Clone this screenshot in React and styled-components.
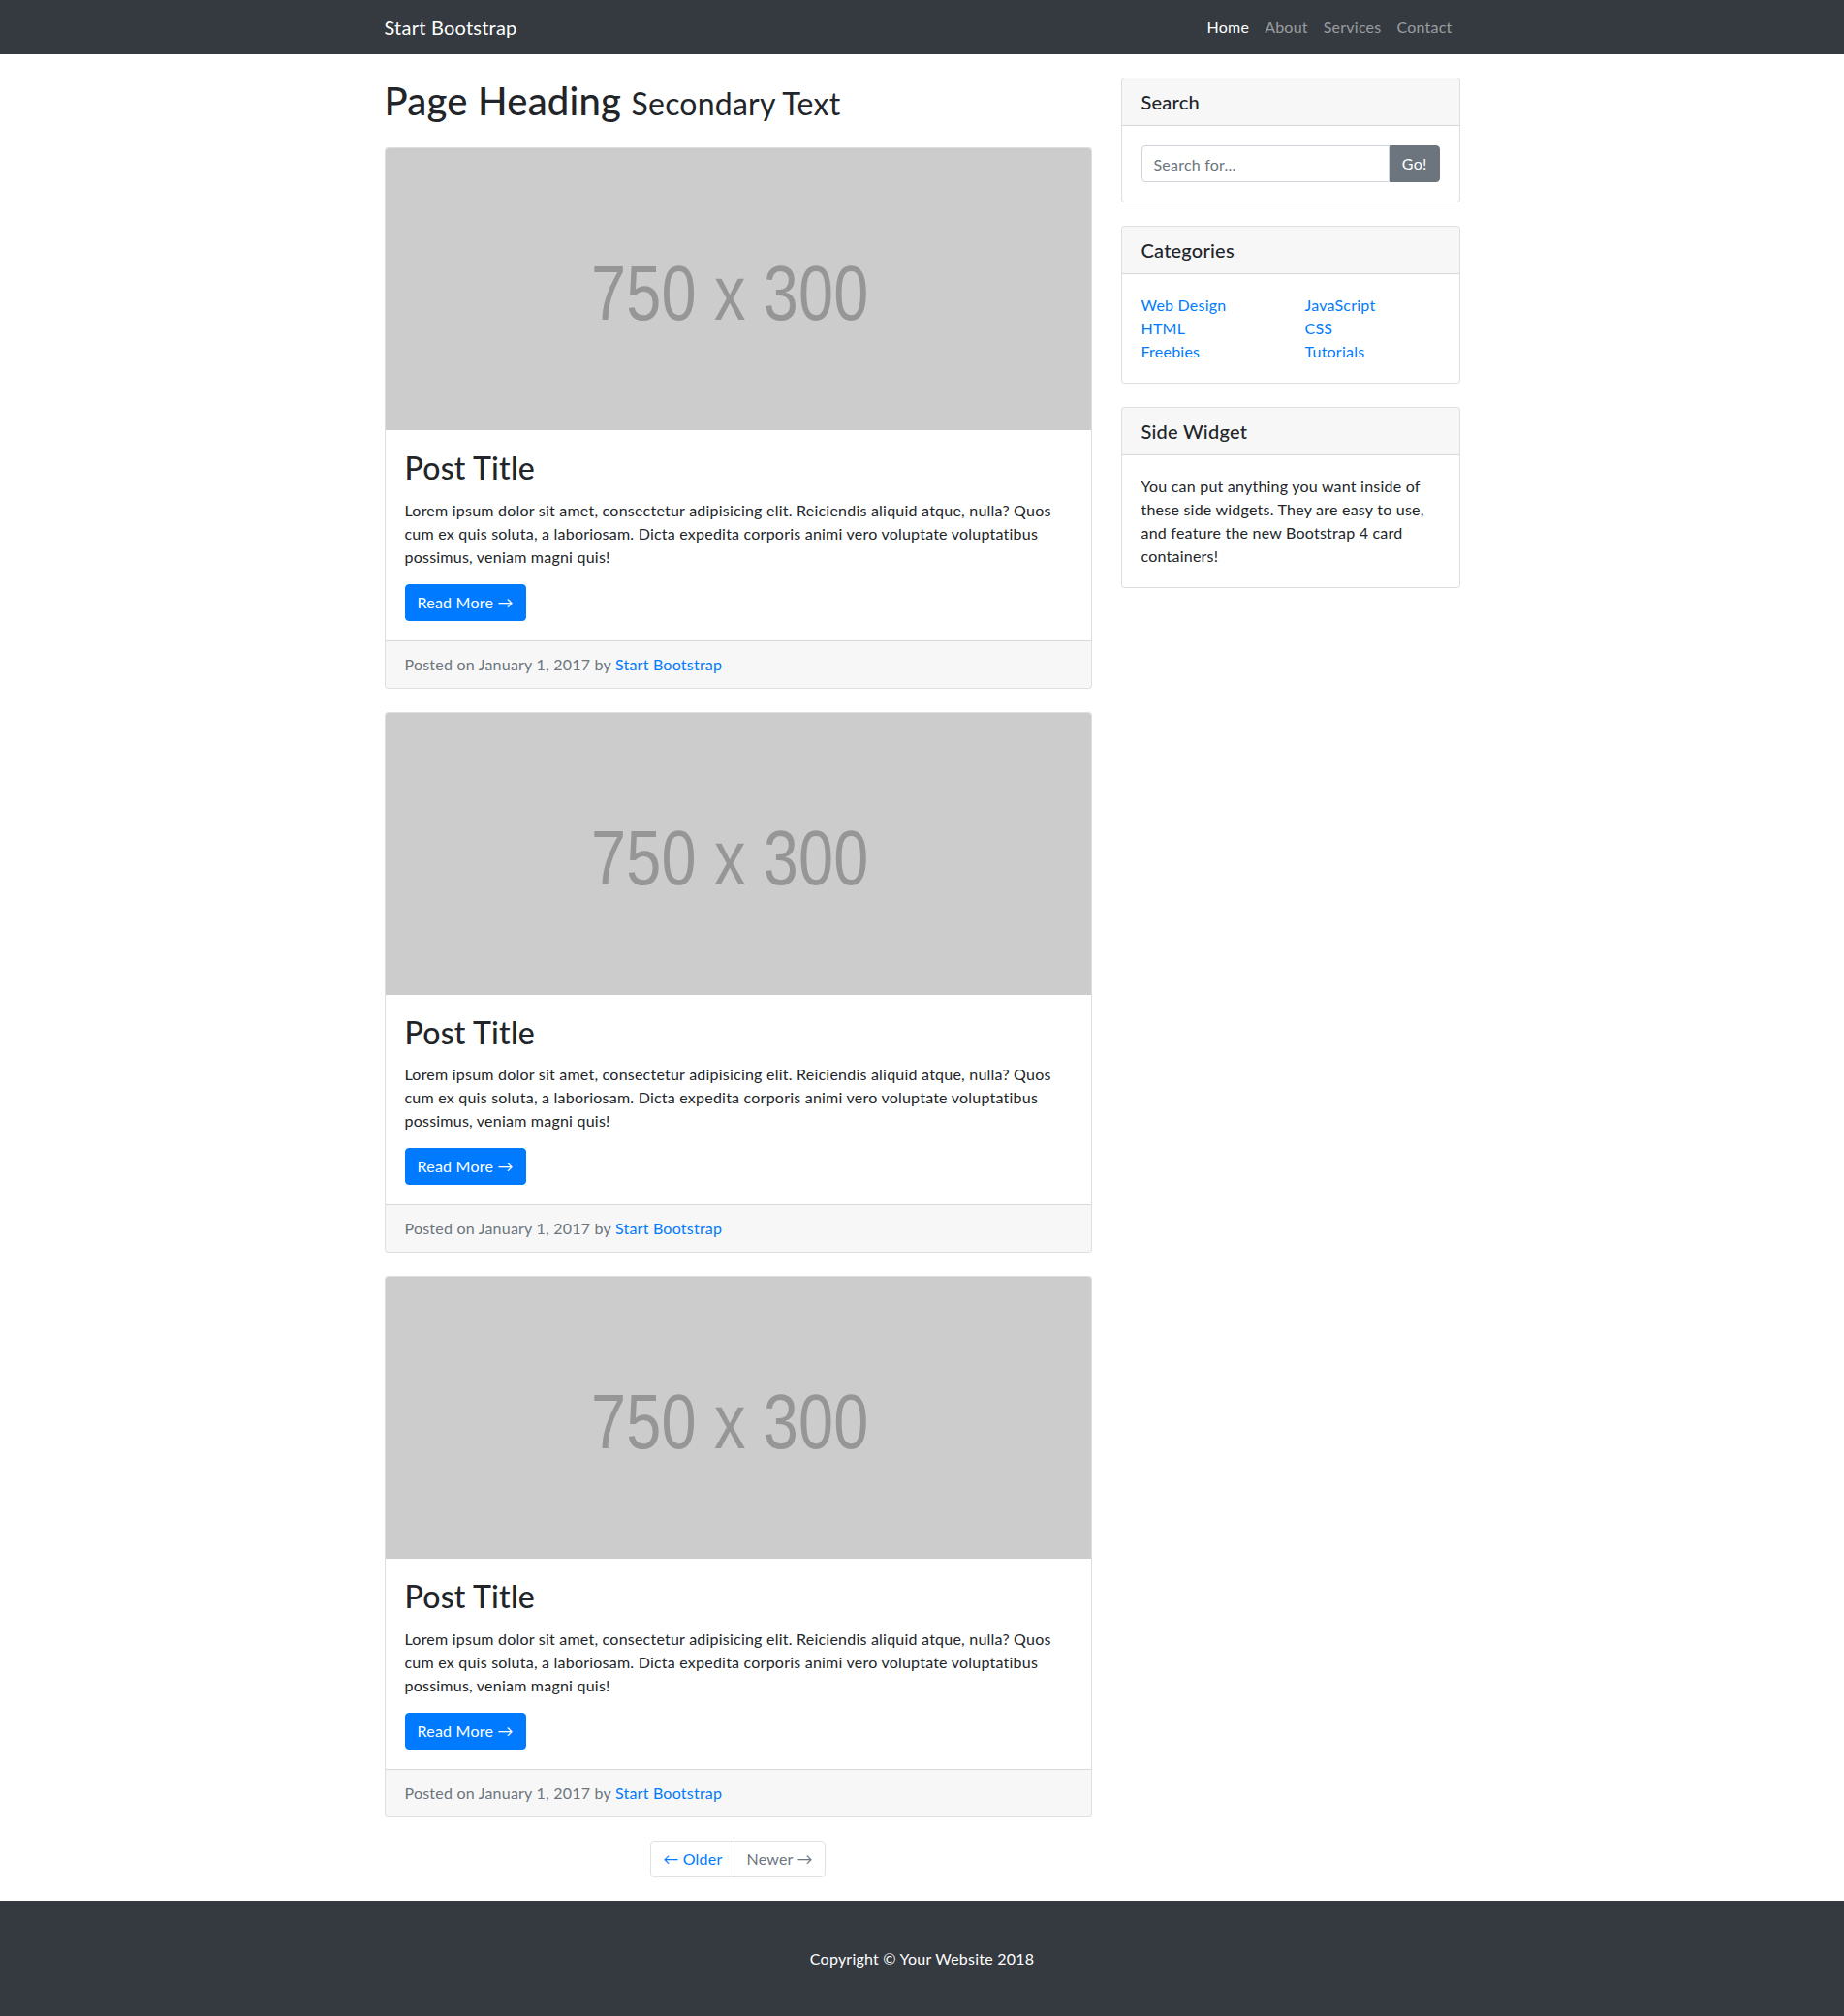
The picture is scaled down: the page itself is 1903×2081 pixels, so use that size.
import React from "react";
import styled, { createGlobalStyle } from "styled-components";

const GlobalStyle = createGlobalStyle`
  * { box-sizing: border-box; }
  body {
    margin: 0;
    font-family: Lato, "Noto Sans", Arial, sans-serif;
    font-size: 16px;
    line-height: 1.5;
    letter-spacing: 0.014em;
    color: #212529;
    background: #fff;
  }
  a { color: #007bff; text-decoration: none; }
`;

const Container = styled.div`
  width: 1140px;
  margin: 0 auto;
  padding: 0 15px;
`;

const Navbar = styled.nav`
  background: #343a40;
  padding: 8px 0;
  ${Container} {
    display: flex;
    align-items: center;
    justify-content: space-between;
  }
`;

const Brand = styled.a`
  color: #fff;
  font-size: 20px;
  line-height: 30px;
  padding: 5px 0;
`;

const NavList = styled.ul`
  display: flex;
  list-style: none;
  margin: 0;
  padding: 0;
`;

const NavLink = styled.a`
  display: block;
  padding: 8px;
  color: ${(p) => (p.$active ? "#fff" : "rgba(255,255,255,.5)")};
`;

const Row = styled.div`
  display: flex;
  margin: 0 -15px;
`;

const Col = styled.div`
  flex: 0 0 ${(p) => p.$size}%;
  max-width: ${(p) => p.$size}%;
  padding: 0 15px;
`;

const PageHeading = styled.h1`
  margin: 24px 0;
  font-size: 40px;
  font-weight: 500;
  line-height: 1.2;
  small {
    font-size: 80%;
    font-weight: 400;
  }
`;

const Card = styled.div`
  border: 1px solid rgba(0, 0, 0, 0.125);
  border-radius: 4px;
  margin: ${(p) => (p.$side ? "24px 0" : "0 0 24px")};
  overflow: hidden;
  background: #fff;
`;

const Thumb = styled.svg`
  display: block;
  width: 100%;
  height: auto;
  background: #ccc;
`;

const CardBody = styled.div`
  padding: 20px;
`;

const CardTitle = styled.h2`
  margin: 0 0 12px;
  font-size: 32px;
  font-weight: 500;
  line-height: 1.2;
`;

const CardText = styled.p`
  margin: 0 0 16px;
`;

const Button = styled.a`
  display: inline-block;
  padding: 6px 12px;
  border-radius: 4px;
  border: 1px solid #007bff;
  background: #007bff;
  color: #fff;
  line-height: 24px;
`;

const CardFooter = styled.div`
  padding: 12px 20px;
  background: rgba(0, 0, 0, 0.03);
  border-top: 1px solid rgba(0, 0, 0, 0.125);
  color: #6c757d;
`;

const CardHeader = styled.h5`
  margin: 0;
  padding: 12px 20px;
  font-size: 20px;
  font-weight: 500;
  line-height: 1.2;
  background: rgba(0, 0, 0, 0.03);
  border-bottom: 1px solid rgba(0, 0, 0, 0.125);
`;

const InputGroup = styled.div`
  display: flex;
`;

const Input = styled.input`
  flex: 1;
  min-width: 0;
  height: 38px;
  padding: 6px 12px;
  font: inherit;
  letter-spacing: inherit;
  color: #495057;
  border: 1px solid #ced4da;
  border-radius: 4px 0 0 4px;
  &::placeholder { color: #6c757d; }
`;

const GoButton = styled.button`
  padding: 6px 12px;
  font: inherit;
  letter-spacing: inherit;
  line-height: 24px;
  color: #fff;
  background: #6c757d;
  border: 1px solid #6c757d;
  border-radius: 0 4px 4px 0;
`;

const CatGrid = styled.div`
  display: grid;
  grid-template-columns: 1fr 1fr;
  margin: 0 -15px;
`;

const CatList = styled.ul`
  list-style: none;
  margin: 0;
  padding: 0 15px;
`;

const Pagination = styled.ul`
  display: flex;
  justify-content: center;
  list-style: none;
  margin: 0 0 24px;
  padding: 0;
`;

const PageLink = styled.a`
  display: block;
  padding: 8px 12px;
  line-height: 20px;
  border: 1px solid #dee2e6;
  color: ${(p) => (p.$disabled ? "#6c757d" : "#007bff")};
  margin-left: ${(p) => (p.$first ? "0" : "-1px")};
  border-radius: ${(p) => (p.$first ? "4px 0 0 4px" : "0 4px 4px 0")};
`;

const Footer = styled.footer`
  background: #343a40;
  padding: 48px 0;
  p {
    margin: 0;
    color: #fff;
    text-align: center;
  }
`;

const Post = () => (
  <Card>
    <Thumb viewBox="0 0 750 300">
      <text
        x="366"
        y="182"
        textAnchor="middle"
        fontFamily="'Liberation Sans', Arial, sans-serif"
        fontSize="83"
        fill="#969696"
        textLength="295"
        lengthAdjust="spacingAndGlyphs"
      >
        750 x 300
      </text>
    </Thumb>
    <CardBody>
      <CardTitle>Post Title</CardTitle>
      <CardText>
        Lorem ipsum dolor sit amet, consectetur adipisicing elit. Reiciendis
        aliquid atque, nulla? Quos cum ex quis soluta, a laboriosam. Dicta
        expedita corporis animi vero voluptate voluptatibus possimus, veniam
        magni quis!
      </CardText>
      <Button href="#">Read More &rarr;</Button>
    </CardBody>
    <CardFooter>
      Posted on January 1, 2017 by <a href="#">Start Bootstrap</a>
    </CardFooter>
  </Card>
);

export default function App() {
  return (
    <>
      <GlobalStyle />
      <Navbar>
        <Container>
          <Brand href="#">Start Bootstrap</Brand>
          <NavList>
            <li><NavLink $active href="#">Home</NavLink></li>
            <li><NavLink href="#">About</NavLink></li>
            <li><NavLink href="#">Services</NavLink></li>
            <li><NavLink href="#">Contact</NavLink></li>
          </NavList>
        </Container>
      </Navbar>

      <Container>
        <Row>
          <Col $size={66.666667}>
            <PageHeading>
              Page Heading <small>Secondary Text</small>
            </PageHeading>
            <Post />
            <Post />
            <Post />
            <Pagination>
              <li><PageLink $first href="#">&larr; Older</PageLink></li>
              <li><PageLink $disabled href="#">Newer &rarr;</PageLink></li>
            </Pagination>
          </Col>

          <Col $size={33.333333}>
            <Card $side>
              <CardHeader>Search</CardHeader>
              <CardBody>
                <InputGroup>
                  <Input type="text" placeholder="Search for..." />
                  <GoButton type="button">Go!</GoButton>
                </InputGroup>
              </CardBody>
            </Card>

            <Card $side>
              <CardHeader>Categories</CardHeader>
              <CardBody>
                <CatGrid>
                  <CatList>
                    <li><a href="#">Web Design</a></li>
                    <li><a href="#">HTML</a></li>
                    <li><a href="#">Freebies</a></li>
                  </CatList>
                  <CatList>
                    <li><a href="#">JavaScript</a></li>
                    <li><a href="#">CSS</a></li>
                    <li><a href="#">Tutorials</a></li>
                  </CatList>
                </CatGrid>
              </CardBody>
            </Card>

            <Card $side>
              <CardHeader>Side Widget</CardHeader>
              <CardBody>
                You can put anything you want inside of these side widgets. They
                are easy to use, and feature the new Bootstrap 4 card containers!
              </CardBody>
            </Card>
          </Col>
        </Row>
      </Container>

      <Footer>
        <Container>
          <p>Copyright &copy; Your Website 2018</p>
        </Container>
      </Footer>
    </>
  );
}
